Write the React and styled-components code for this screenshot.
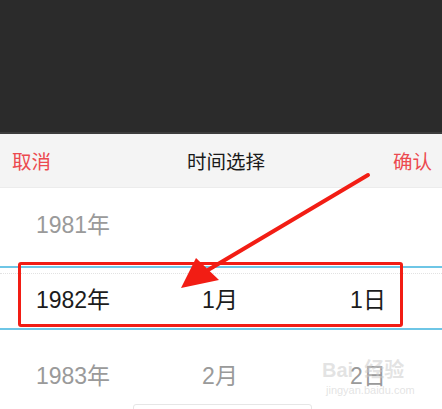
import React from 'react';
import styled, { createGlobalStyle } from 'styled-components';

const Global = createGlobalStyle`
  html, body { margin: 0; padding: 0; background: #fff; }
  body { font-family: "Liberation Sans", "Noto Sans CJK SC", sans-serif; }
`;

const Page = styled.div`
  position: relative;
  width: 442px;
  height: 409px;
  overflow: hidden;
  display: flex;
  flex-direction: column;
`;

const Backdrop = styled.div`
  height: 134px;
  background: #2b2b2b;
  border-bottom: 2px solid #3c3c3c;
`;

const Header = styled.div`
  height: 54px;
  background: #f4f4f4;
  border-bottom: 1px solid #ececec;
  display: flex;
  align-items: center;
  justify-content: space-between;
  padding: 0 10px 0 12px;
  font-size: 19.5px;
  font-family: "Noto Sans CJK SC", sans-serif;
`;

const HeadBtn = styled.span`
  color: #ec4a4f;
`;

const Title = styled.span`
  color: #1a1a1a;
  margin-left: 8px;
`;

const Picker = styled.div`
  flex: 1;
  display: flex;
  flex-direction: column;
  background: #fff;
`;

const Row = styled.div`
  height: ${p => p.h}px;
  padding-top: ${p => p.pt || 0}px;
  padding-bottom: ${p => p.pb || 0}px;
  box-sizing: border-box;
  display: grid;
  grid-template-columns: 146px 148px 148px;
  align-items: center;
  font-size: 23px;
  color: ${p => (p.active ? '#1c1c1c' : '#9a9a9a')};
  border-top: ${p => (p.active ? '2px solid #6ec6e6' : 'none')};
  border-bottom: ${p => (p.active ? '2px solid #6ec6e6' : 'none')};
`;

const Cell = styled.span`
  text-align: center;
`;

const Dots = styled.div`
  position: absolute;
  left: 0;
  right: 0;
  top: 273px;
  border-top: 1px dotted #e2e2e2;
`;

const Scroll = styled.div`
  position: absolute;
  left: 133px;
  top: 404px;
  width: 179px;
  height: 8px;
  border: 1px solid #e6e6e6;
  border-radius: 3px;
  box-sizing: border-box;
`;

const Mark = styled.div`
  position: absolute;
  left: 322px;
  top: 360px;
  color: rgba(200, 200, 200, 0.5);
  font-family: "Liberation Sans", "Noto Sans CJK SC", sans-serif;
  line-height: 1;
  pointer-events: none;
`;

const MarkBig = styled.div`
  font-size: 20px;
  font-weight: bold;
`;

const MarkSmall = styled.div`
  font-size: 11px;
  margin-top: 5px;
  padding-left: 4px;
`;

const Highlight = styled.div`
  position: absolute;
  left: 18px;
  top: 262px;
  width: 385px;
  height: 65px;
  border: 3px solid #f21d14;
  border-radius: 3px;
  box-sizing: border-box;
`;

const Arrow = styled.svg`
  position: absolute;
  left: 0;
  top: 0;
  pointer-events: none;
`;

const rows = [
  { y: '1981年', m: '', d: '', h: 78, pb: 8 },
  { y: '1982年', m: '1月', d: '1日', h: 64, active: true },
  { y: '1983年', m: '2月', d: '2日', h: 79, pt: 8 },
];

export default function App() {
  return (
    <Page>
      <Global />
      <Backdrop />
      <Header>
        <HeadBtn>取消</HeadBtn>
        <Title>时间选择</Title>
        <HeadBtn>确认</HeadBtn>
      </Header>
      <Picker>
        {rows.map(r => (
          <Row key={r.y} h={r.h} pt={r.pt} pb={r.pb} active={r.active}>
            <Cell>{r.y}</Cell>
            <Cell>{r.m}</Cell>
            <Cell>{r.d}</Cell>
          </Row>
        ))}
      </Picker>
      <Dots />
      <Scroll />
      <Mark>
        <MarkBig>Bai&nbsp;&nbsp;经验</MarkBig>
        <MarkSmall>jingyan.baidu.com</MarkSmall>
      </Mark>
      <Highlight />
      <Arrow width="442" height="409" viewBox="0 0 442 409">
        <path d="M368 175 L208 270" stroke="#f21d14" strokeWidth="4" strokeLinecap="round" />
        <path d="M181 288 L196 258 L219 280 Z" fill="#f21d14" />
      </Arrow>
    </Page>
  );
}
